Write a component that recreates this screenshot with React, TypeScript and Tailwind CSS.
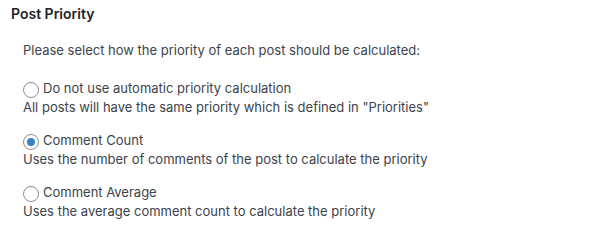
const options = [
  {
    id: 'none',
    label: 'Do not use automatic priority calculation',
    description: 'All posts will have the same priority which is defined in "Priorities"',
  },
  {
    id: 'count',
    label: 'Comment Count',
    description: 'Uses the number of comments of the post to calculate the priority',
  },
  {
    id: 'average',
    label: 'Comment Average',
    description: 'Uses the average comment count to calculate the priority',
  },
]

function Radio({ checked }: { checked: boolean }) {
  return (
    <span className="flex h-4 w-4 shrink-0 translate-y-[1px] items-center justify-center rounded-full border border-[#8c8f94] bg-white">
      {checked && <span className="h-2 w-2 rounded-full bg-[#3582c4]" />}
    </span>
  )
}

export default function App() {
  const selected = 'count'
  return (
    <div
      className="h-[245px] w-[600px] bg-white text-[13px] text-[#3c434a]"
      style={{ fontFamily: 'Inter, "Noto Sans", sans-serif' }}
    >
      <div className="pl-[11px] pt-[4px]">
        <h2 className="text-[14px] font-semibold leading-[20px] text-[#1d2327]">Post Priority</h2>
      </div>
      <div className="pl-[23px]">
        <p className="mt-[17px] leading-[19px]">
          Please select how the priority of each post should be calculated:
        </p>
        <div className="mt-[20px] flex flex-col gap-4">
          {options.map((o) => (
            <div key={o.id}>
              <label className="flex h-[18px] items-center gap-1">
                <Radio checked={o.id === selected} />
                <span>{o.label}</span>
              </label>
              <div className="leading-[18px]">{o.description}</div>
            </div>
          ))}
        </div>
      </div>
    </div>
  )
}
